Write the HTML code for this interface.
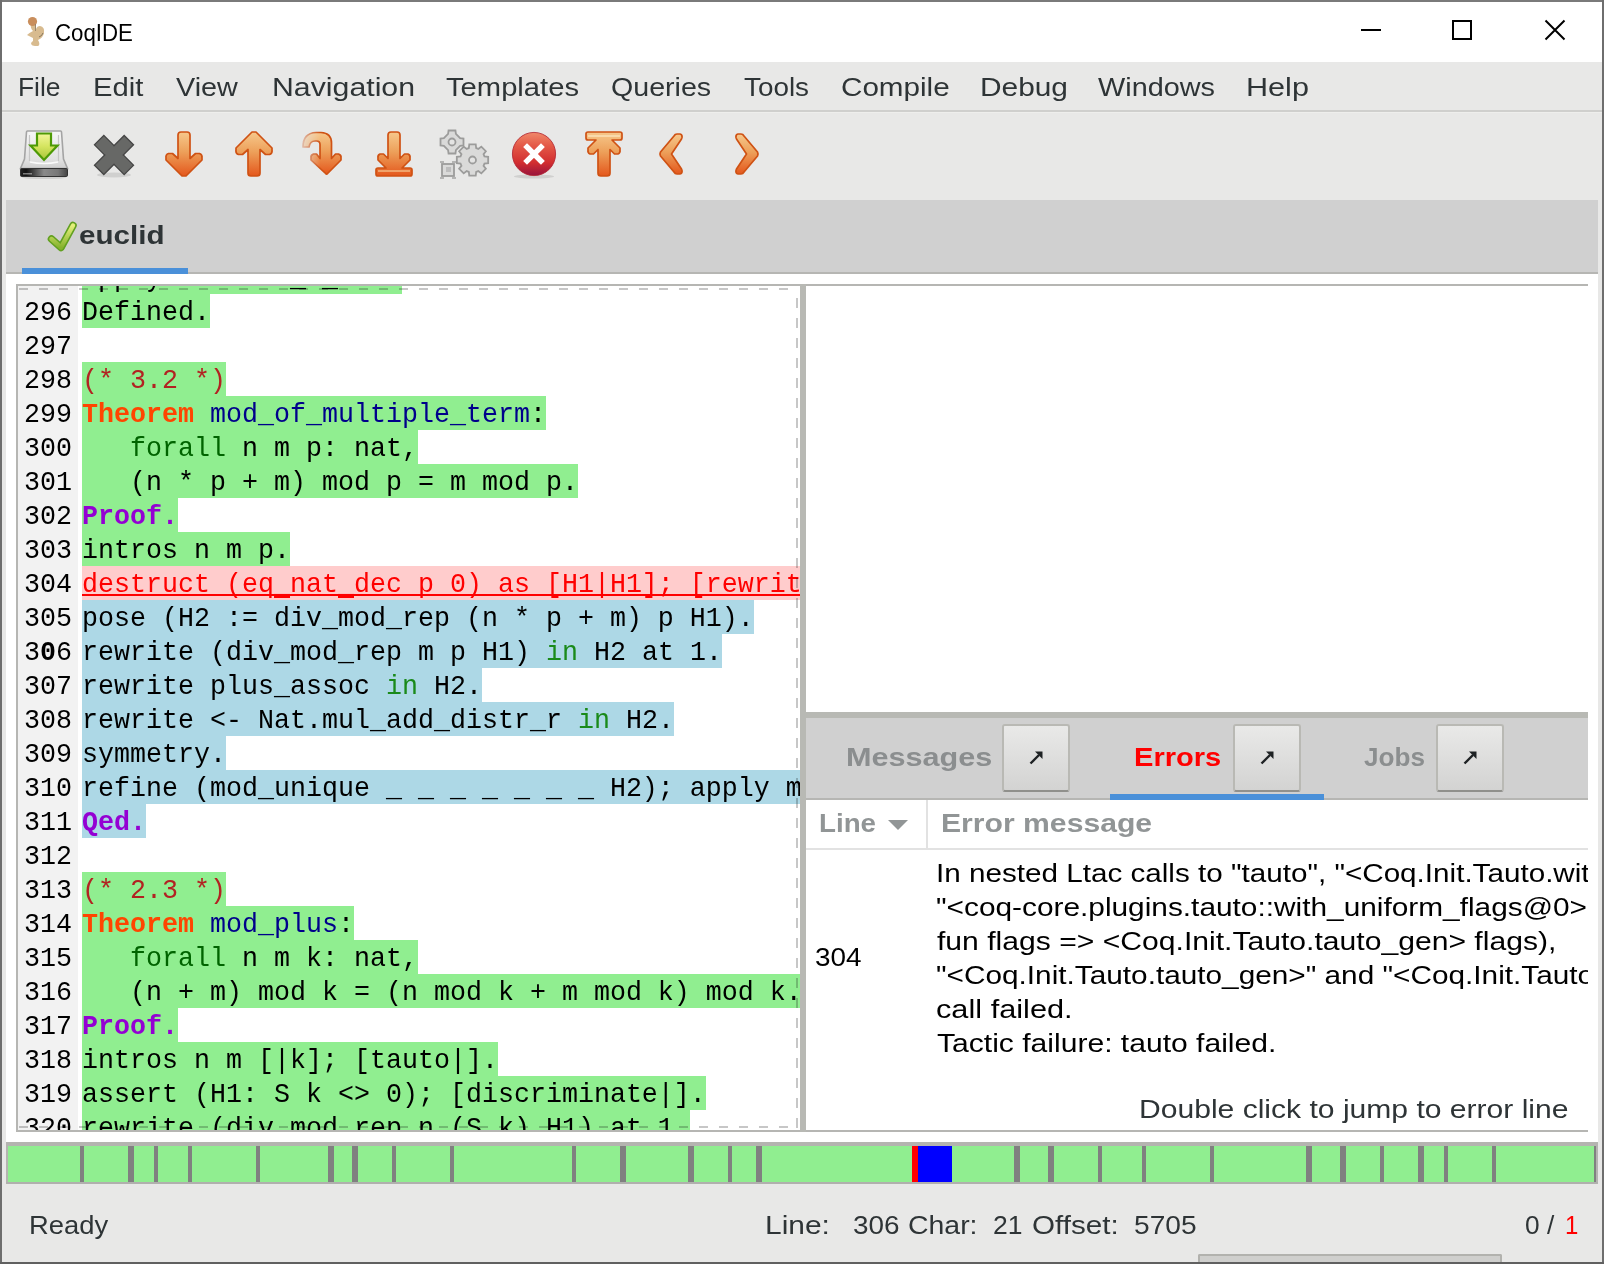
<!DOCTYPE html><html><head><meta charset="utf-8"><title>CoqIDE</title><style>*{box-sizing:border-box}
html,body{margin:0;padding:0}
body{width:1604px;height:1264px;overflow:hidden;position:relative;background:#e8e8e7;font-family:"Liberation Sans",sans-serif}
.a{position:absolute}
.t{position:absolute;white-space:pre;transform-origin:0 0}
.c{position:absolute;white-space:pre;font-family:"Liberation Mono",monospace;font-size:26.6667px;line-height:34px;color:#000;transform:scaleY(1.06);transform-origin:0 26px}
</style></head><body>
<div class="a" style="left:0px;top:0px;width:1604px;height:2px;background:#7a7a7a"></div>
<div class="a" style="left:0px;top:0px;width:2px;height:1264px;background:#6e6e6e"></div>
<div class="a" style="left:1602px;top:0px;width:2px;height:1264px;background:#6e6e6e"></div>
<div class="a" style="left:0px;top:1262px;width:1604px;height:2px;background:#606060"></div>
<div class="a" style="left:2px;top:2px;width:1600px;height:60px;background:#fff"></div>
<div class="a" style="left:2px;top:110px;width:1600px;height:2px;background:#cfcfcd"></div>
<div class="a" style="left:2px;top:112px;width:1600px;height:1px;background:#eeeeec"></div>
<div class="a" style="left:6px;top:200px;width:1592px;height:72px;background:#d0d0d0"></div>
<div class="a" style="left:6px;top:272px;width:1592px;height:2px;background:#b6b6b3"></div>
<div class="a" style="left:22px;top:268px;width:166px;height:6px;background:#4a90d9"></div>
<div class="a" style="left:6px;top:274px;width:1592px;height:868px;background:#fff"></div>
<div class="a" style="left:16px;top:284px;width:1572px;height:2px;background:#b6b6b3"></div>
<div class="a" style="left:16px;top:284px;width:2px;height:848px;background:#b6b6b3"></div>
<div class="a" style="left:16px;top:1130px;width:1572px;height:2px;background:#b6b6b3"></div>
<div class="a" style="left:18px;top:286px;width:782px;height:844px;overflow:hidden;background:#fff">
<div class="a" style="left:0;top:0;width:60px;height:844px;background:#f2f2f2"></div>
<div class="a" style="left:64px;top:-26px;width:320px;height:34px;background:#90ee90"></div>
<div class="c" style="left:6px;top:-24px">295</div>
<div class="c" style="left:64px;top:-24px">apply Hmod1a _ _ H1.</div>
<div class="a" style="left:64px;top:8px;width:128px;height:34px;background:#90ee90"></div>
<div class="c" style="left:6px;top:10px">296</div>
<div class="c" style="left:64px;top:10px">Defined.</div>
<div class="c" style="left:6px;top:44px">297</div>
<div class="c" style="left:64px;top:44px"></div>
<div class="a" style="left:64px;top:76px;width:144px;height:34px;background:#90ee90"></div>
<div class="c" style="left:6px;top:78px">298</div>
<div class="c" style="left:64px;top:78px"><span style="color:#b22222">(* 3.2 *)</span></div>
<div class="a" style="left:64px;top:110px;width:464px;height:34px;background:#90ee90"></div>
<div class="c" style="left:6px;top:112px">299</div>
<div class="c" style="left:64px;top:112px"><span style="color:#ff4500;font-weight:700">Theorem</span> <span style="color:#00008b">mod_of_multiple_term</span>:</div>
<div class="a" style="left:64px;top:144px;width:336px;height:34px;background:#90ee90"></div>
<div class="c" style="left:6px;top:146px">300</div>
<div class="c" style="left:64px;top:146px">   <span style="color:#006400">forall</span> n m p: nat,</div>
<div class="a" style="left:64px;top:178px;width:496px;height:34px;background:#90ee90"></div>
<div class="c" style="left:6px;top:180px">301</div>
<div class="c" style="left:64px;top:180px">   (n * p + m) mod p = m mod p.</div>
<div class="a" style="left:64px;top:212px;width:96px;height:34px;background:#90ee90"></div>
<div class="c" style="left:6px;top:214px">302</div>
<div class="c" style="left:64px;top:214px"><span style="color:#9400d3;font-weight:700">Proof.</span></div>
<div class="a" style="left:64px;top:246px;width:208px;height:34px;background:#90ee90"></div>
<div class="c" style="left:6px;top:248px">303</div>
<div class="c" style="left:64px;top:248px">intros n m p.</div>
<div class="a" style="left:64px;top:280px;width:1000px;height:34px;background:#ffcccc"></div>
<div class="a" style="left:64px;top:308px;width:1000px;height:2px;background:#ff0000"></div>
<div class="a" style="left:256px;top:310px;width:16px;height:2px;background:#ff0000"></div>
<div class="a" style="left:320px;top:310px;width:16px;height:2px;background:#ff0000"></div>
<div class="c" style="left:6px;top:282px">304</div>
<div class="c" style="left:64px;top:282px"><span style="color:#ff0000">destruct (eq_nat_dec p 0) as [H1|H1]; [rewrite H1 in *; tauto|].</span></div>
<div class="a" style="left:64px;top:314px;width:672px;height:34px;background:#add8e6"></div>
<div class="c" style="left:6px;top:316px">305</div>
<div class="c" style="left:64px;top:316px">pose (H2 := div_mod_rep (n * p + m) p H1).</div>
<div class="a" style="left:64px;top:348px;width:640px;height:34px;background:#add8e6"></div>
<div class="c" style="left:6px;top:350px">3<b>0</b>6</div>
<div class="c" style="left:64px;top:350px">rewrite (div_mod_rep m p H1) <span style="color:#1a8a1a">in</span> H2 at 1.</div>
<div class="a" style="left:64px;top:382px;width:400px;height:34px;background:#add8e6"></div>
<div class="c" style="left:6px;top:384px">307</div>
<div class="c" style="left:64px;top:384px">rewrite plus_assoc <span style="color:#1a8a1a">in</span> H2.</div>
<div class="a" style="left:64px;top:416px;width:592px;height:34px;background:#add8e6"></div>
<div class="c" style="left:6px;top:418px">308</div>
<div class="c" style="left:64px;top:418px">rewrite &lt;- Nat.mul_add_distr_r <span style="color:#1a8a1a">in</span> H2.</div>
<div class="a" style="left:64px;top:450px;width:144px;height:34px;background:#add8e6"></div>
<div class="c" style="left:6px;top:452px">309</div>
<div class="c" style="left:64px;top:452px">symmetry.</div>
<div class="a" style="left:64px;top:484px;width:928px;height:34px;background:#add8e6"></div>
<div class="c" style="left:6px;top:486px">310</div>
<div class="c" style="left:64px;top:486px">refine (mod_unique _ _ _ _ _ _ _ H2); apply mod_lt; tauto.</div>
<div class="a" style="left:64px;top:518px;width:64px;height:34px;background:#add8e6"></div>
<div class="c" style="left:6px;top:520px">311</div>
<div class="c" style="left:64px;top:520px"><span style="color:#9400d3;font-weight:700">Qed.</span></div>
<div class="c" style="left:6px;top:554px">312</div>
<div class="c" style="left:64px;top:554px"></div>
<div class="a" style="left:64px;top:586px;width:144px;height:34px;background:#90ee90"></div>
<div class="c" style="left:6px;top:588px">313</div>
<div class="c" style="left:64px;top:588px"><span style="color:#b22222">(* 2.3 *)</span></div>
<div class="a" style="left:64px;top:620px;width:272px;height:34px;background:#90ee90"></div>
<div class="c" style="left:6px;top:622px">314</div>
<div class="c" style="left:64px;top:622px"><span style="color:#ff4500;font-weight:700">Theorem</span> <span style="color:#00008b">mod_plus</span>:</div>
<div class="a" style="left:64px;top:654px;width:336px;height:34px;background:#90ee90"></div>
<div class="c" style="left:6px;top:656px">315</div>
<div class="c" style="left:64px;top:656px">   <span style="color:#006400">forall</span> n m k: nat,</div>
<div class="a" style="left:64px;top:688px;width:720px;height:34px;background:#90ee90"></div>
<div class="c" style="left:6px;top:690px">316</div>
<div class="c" style="left:64px;top:690px">   (n + m) mod k = (n mod k + m mod k) mod k.</div>
<div class="a" style="left:64px;top:722px;width:96px;height:34px;background:#90ee90"></div>
<div class="c" style="left:6px;top:724px">317</div>
<div class="c" style="left:64px;top:724px"><span style="color:#9400d3;font-weight:700">Proof.</span></div>
<div class="a" style="left:64px;top:756px;width:416px;height:34px;background:#90ee90"></div>
<div class="c" style="left:6px;top:758px">318</div>
<div class="c" style="left:64px;top:758px">intros n m [|k]; [tauto|].</div>
<div class="a" style="left:64px;top:790px;width:624px;height:34px;background:#90ee90"></div>
<div class="c" style="left:6px;top:792px">319</div>
<div class="c" style="left:64px;top:792px">assert (H1: S k &lt;&gt; 0); [discriminate|].</div>
<div class="a" style="left:64px;top:824px;width:608px;height:34px;background:#90ee90"></div>
<div class="c" style="left:6px;top:826px">320</div>
<div class="c" style="left:64px;top:826px">rewrite (div_mod_rep n (S k) H1) at 1.</div>
<div class="a" style="left:0;top:2px;width:778px;height:2px;background:repeating-linear-gradient(90deg,transparent 0 1px,rgba(0,0,0,.22) 1px 10px,transparent 10px 20px)"></div>
<div class="a" style="left:0;top:840px;width:778px;height:2px;background:repeating-linear-gradient(90deg,transparent 0 1px,rgba(0,0,0,.22) 1px 10px,transparent 10px 20px)"></div>
<div class="a" style="left:778px;top:12px;width:2px;height:832px;background:repeating-linear-gradient(180deg,rgba(0,0,0,.22) 0 10px,transparent 10px 20px)"></div>
</div>
<div class="a" style="left:800px;top:284px;width:6px;height:848px;background:#b8b9b4"></div>
<div class="a" style="left:806px;top:712px;width:782px;height:6px;background:#b8b9b4"></div>
<div class="a" style="left:806px;top:718px;width:782px;height:80px;background:#d0d0d0"></div>
<div class="a" style="left:806px;top:798px;width:782px;height:2px;background:#b6b6b3"></div>
<div class="a" style="left:1110px;top:794px;width:214px;height:6px;background:#4a90d9"></div>
<div class="a" style="left:1002px;top:724px;width:68px;height:68px;border:2px solid #b9b9b4;border-bottom-color:#90908c;border-radius:3px;background:linear-gradient(#e9e9e8,#d3d3d2)"></div>
<svg class="a" style="left:1023px;top:744px" width="24" height="24" viewBox="0 0 24 24"><path d="M7.5,19.5 L16,11" stroke="#1e2224" stroke-width="2.4"/><path d="M12,7.5 L19.5,7.5 L19.5,15 Z" fill="#1e2224"/></svg>
<div class="a" style="left:1233px;top:724px;width:68px;height:68px;border:2px solid #b9b9b4;border-bottom-color:#90908c;border-radius:3px;background:linear-gradient(#e9e9e8,#d3d3d2)"></div>
<svg class="a" style="left:1254px;top:744px" width="24" height="24" viewBox="0 0 24 24"><path d="M7.5,19.5 L16,11" stroke="#1e2224" stroke-width="2.4"/><path d="M12,7.5 L19.5,7.5 L19.5,15 Z" fill="#1e2224"/></svg>
<div class="a" style="left:1436px;top:724px;width:68px;height:68px;border:2px solid #b9b9b4;border-bottom-color:#90908c;border-radius:3px;background:linear-gradient(#e9e9e8,#d3d3d2)"></div>
<svg class="a" style="left:1457px;top:744px" width="24" height="24" viewBox="0 0 24 24"><path d="M7.5,19.5 L16,11" stroke="#1e2224" stroke-width="2.4"/><path d="M12,7.5 L19.5,7.5 L19.5,15 Z" fill="#1e2224"/></svg>
<div class="a" style="left:926px;top:800px;width:2px;height:48px;background:#e2e2e2"></div>
<div class="a" style="left:806px;top:848px;width:782px;height:2px;background:#e2e2e2"></div>
<svg class="a" style="left:887px;top:819px" width="22" height="12" viewBox="0 0 22 12"><path d="M1 1 L21 1 L11 11 Z" fill="#919596"/></svg>
<div class="a" style="left:6px;top:1142px;width:1592px;height:4px;background:#b4b4b0"></div>
<div class="a" style="left:6px;top:1182px;width:1592px;height:2px;background:#b0b0ad"></div>
<div class="a" style="left:6px;top:1146px;width:2px;height:36px;background:#b4b4b0"></div>
<div class="a" style="left:1596px;top:1146px;width:2px;height:36px;background:#b4b4b0"></div>
<div class="a" style="left:8px;top:1146px;width:1588px;height:36px;background:#90ee90"></div>
<div class="a" style="left:80px;top:1146px;width:4px;height:36px;background:#808080"></div>
<div class="a" style="left:128px;top:1146px;width:6px;height:36px;background:#808080"></div>
<div class="a" style="left:154px;top:1146px;width:4px;height:36px;background:#808080"></div>
<div class="a" style="left:188px;top:1146px;width:4px;height:36px;background:#808080"></div>
<div class="a" style="left:256px;top:1146px;width:4px;height:36px;background:#808080"></div>
<div class="a" style="left:328px;top:1146px;width:6px;height:36px;background:#808080"></div>
<div class="a" style="left:352px;top:1146px;width:6px;height:36px;background:#808080"></div>
<div class="a" style="left:392px;top:1146px;width:4px;height:36px;background:#808080"></div>
<div class="a" style="left:450px;top:1146px;width:4px;height:36px;background:#808080"></div>
<div class="a" style="left:572px;top:1146px;width:4px;height:36px;background:#808080"></div>
<div class="a" style="left:620px;top:1146px;width:6px;height:36px;background:#808080"></div>
<div class="a" style="left:688px;top:1146px;width:6px;height:36px;background:#808080"></div>
<div class="a" style="left:728px;top:1146px;width:4px;height:36px;background:#808080"></div>
<div class="a" style="left:756px;top:1146px;width:6px;height:36px;background:#808080"></div>
<div class="a" style="left:1014px;top:1146px;width:6px;height:36px;background:#808080"></div>
<div class="a" style="left:1048px;top:1146px;width:6px;height:36px;background:#808080"></div>
<div class="a" style="left:1098px;top:1146px;width:4px;height:36px;background:#808080"></div>
<div class="a" style="left:1142px;top:1146px;width:4px;height:36px;background:#808080"></div>
<div class="a" style="left:1210px;top:1146px;width:4px;height:36px;background:#808080"></div>
<div class="a" style="left:1306px;top:1146px;width:6px;height:36px;background:#808080"></div>
<div class="a" style="left:1340px;top:1146px;width:6px;height:36px;background:#808080"></div>
<div class="a" style="left:1380px;top:1146px;width:4px;height:36px;background:#808080"></div>
<div class="a" style="left:1418px;top:1146px;width:6px;height:36px;background:#808080"></div>
<div class="a" style="left:1444px;top:1146px;width:4px;height:36px;background:#808080"></div>
<div class="a" style="left:1492px;top:1146px;width:4px;height:36px;background:#808080"></div>
<div class="a" style="left:1594px;top:1146px;width:2px;height:36px;background:#808080"></div>
<div class="a" style="left:912px;top:1146px;width:6px;height:36px;background:#ff0000"></div>
<div class="a" style="left:918px;top:1146px;width:34px;height:36px;background:#0000ff"></div>
<div class="a" style="left:1198px;top:1254px;width:304px;height:8px;border:2px solid #b2b2ae;border-bottom:0;border-radius:2px 2px 0 0;background:#cfcfcd"></div>
<svg width="0" height="0" style="position:absolute"><defs>
<linearGradient id="og" x1="0" y1="0" x2="0" y2="1"><stop offset="0" stop-color="#f6c88c"/><stop offset="0.45" stop-color="#eda05a"/><stop offset="1" stop-color="#e4571c"/></linearGradient>
<linearGradient id="og2" x1="0" y1="0" x2="0" y2="1"><stop offset="0" stop-color="#f7cf98"/><stop offset="0.5" stop-color="#ec9a50"/><stop offset="1" stop-color="#e25a1e"/></linearGradient>
<linearGradient id="ogh" x1="0" y1="0" x2="1" y2="0"><stop offset="0" stop-color="#f2c08a" stop-opacity="0.35"/><stop offset="0.45" stop-color="#eeaa66" stop-opacity="1"/><stop offset="1" stop-color="#eaa05a"/></linearGradient>
<linearGradient id="gg" x1="0" y1="0" x2="0" y2="1"><stop offset="0" stop-color="#f2f79a"/><stop offset="0.5" stop-color="#d4e45e"/><stop offset="1" stop-color="#a6c43a"/></linearGradient>
<linearGradient id="dg" x1="0" y1="0" x2="0" y2="1"><stop offset="0" stop-color="#f6f6f6"/><stop offset="0.75" stop-color="#e2e2e2"/><stop offset="1" stop-color="#cfcfcf"/></linearGradient>
<linearGradient id="db" x1="0" y1="0" x2="1" y2="0"><stop offset="0" stop-color="#222"/><stop offset="0.12" stop-color="#111"/><stop offset="0.5" stop-color="#8a8a8a"/><stop offset="0.8" stop-color="#777"/><stop offset="1" stop-color="#444"/></linearGradient>
<linearGradient id="rg" x1="0" y1="0" x2="0" y2="1"><stop offset="0" stop-color="#f0886a"/><stop offset="0.3" stop-color="#e45a48"/><stop offset="0.7" stop-color="#d22e30"/><stop offset="1" stop-color="#98143e"/></linearGradient>
<linearGradient id="cg" x1="0" y1="0" x2="0" y2="1"><stop offset="0" stop-color="#e4f07a"/><stop offset="1" stop-color="#86b22e"/></linearGradient>
</defs></svg>
<svg class="a" style="left:1355px;top:14px" width="250" height="34" viewBox="0 0 250 34"><path d="M6,16 H26" stroke="#000" stroke-width="2"/><rect x="98" y="7" width="18" height="18" fill="none" stroke="#000" stroke-width="2"/><path d="M190.5,6.5 L209.5,25.5 M209.5,6.5 L190.5,25.5" stroke="#000" stroke-width="2"/></svg>
<svg class="a" style="left:24px;top:14px" width="24" height="34" viewBox="0 0 24 34"><path d="M7,10 Q6,14 9,17 Q5,19 3,21 Q7,23 9,24 L9,27 Q7,28 7,30 Q8,32 11,32 L14,32 Q16,31 15,28 L14,26 Q19,24 20,19 Q21,13 16,12 Q13,12 12,15 L12,10 Z" fill="#d8bb8f"/><circle cx="8.5" cy="7.5" r="4.6" fill="#c98e5c"/><path d="M11.5,10 V17" stroke="#8a7a66" stroke-width="0.8"/><path d="M15,23 Q18,22 19,19" stroke="#6f6250" stroke-width="0.8" fill="none"/></svg>
<svg class="a" style="left:18px;top:129px" width="52" height="52" viewBox="0 0 52 52"><ellipse cx="26" cy="48.5" rx="22" ry="1.6" fill="rgba(0,0,0,0.10)"/><path d="M8.5,3 Q8.5,2 9.5,2 L42.5,2 Q43.5,2 43.5,3 L45.5,30 L49.5,39.5 L2.5,39.5 L6.5,30 Z" fill="url(#dg)" stroke="#a4a4a4" stroke-width="1.6"/><path d="M11.5,6 L11.5,32 M40.5,6 L40.5,32" stroke="#c6c6c6" stroke-width="1.2"/><path d="M12,33 Q26,36 40,33" stroke="#fafafa" stroke-width="1.6" fill="none"/><rect x="2.5" y="39.5" width="47" height="8" rx="1.2" fill="url(#db)" stroke="#333" stroke-width="1"/><rect x="5" y="44" width="9" height="1.5" fill="#d0d0d0" opacity=".55"/><path d="M19,4.5 L33,4.5 L33,16.5 L39.5,16.5 L26,31 L12.5,16.5 L19,16.5 Z" fill="url(#gg)" stroke="#4e9a06" stroke-width="2.2" stroke-linejoin="miter"/></svg>
<svg class="a" style="left:90px;top:128px" width="48" height="52" viewBox="0 0 48 52"><ellipse cx="24" cy="47" rx="17" ry="2.4" fill="rgba(0,0,0,0.10)"/><g transform="translate(24,27) rotate(45)"><rect x="-21" y="-6.6" width="42" height="13.2" fill="#676866" stroke="#464646" stroke-width="1.3"/></g><g transform="translate(24,27) rotate(-45)"><rect x="-21" y="-6.6" width="42" height="13.2" fill="#676866" stroke="#464646" stroke-width="1.3"/></g><g transform="translate(24,27) rotate(45)"><rect x="-20.3" y="-5.9" width="40.6" height="11.8" fill="#676866"/></g></svg>
<svg class="a" style="left:160px;top:130px" width="48" height="48" viewBox="0 0 48 48"><path d="M18,5 Q18,2 21,2 L27,2 Q30,2 30,5 L30,28.5 L35.5,23.5 L39.5,23.5 Q42.5,24.5 42,28 L42,30 L26,46 L22,46 L6,30 L6,28 Q5.5,24.5 8.5,23.5 L12.5,23.5 L18,28.5 Z" fill="url(#og)" stroke="#cf5214" stroke-width="1.7" stroke-linejoin="round"/></svg>
<svg class="a" style="left:230px;top:130px" width="48" height="48" viewBox="0 0 48 48"><path d="M18,43 Q18,46,21,46 L27,46 Q30,46,30,43 L30,19.5 L35.5,24.5 L39.5,24.5 Q42.5,23.5,42,20 L42,18 L26,2 L22,2 L6,18 L6,20 Q5.5,23.5,8.5,24.5 L12.5,24.5 L18,19.5 Z" fill="url(#og)" stroke="#cf5214" stroke-width="1.7" stroke-linejoin="round"/></svg>
<svg class="a" style="left:300px;top:130px" width="48" height="48" viewBox="0 0 48 48"><defs><linearGradient id="fadeg" x1="0" y1="0" x2="48" y2="0" gradientUnits="userSpaceOnUse"><stop offset="0" stop-color="#333"/><stop offset="0.42" stop-color="#fff"/></linearGradient><mask id="fadem"><rect x="0" y="0" width="48" height="48" fill="url(#fadeg)"/></mask></defs><path mask="url(#fadem)" d="M3,17 Q3,3 16,2.5 L21,2.5 Q31.5,3 31.5,13 L31.5,28.5 L35.5,24 L38.5,24 Q41.5,25 41,28 L41,30 L27.6,43.5 Q26.6,44.8 25.6,43.5 L11,30 L11,28 Q10.5,25 13.5,24 L16.5,24 L20,28.5 L20,14.5 Q20,11 16.5,11 L15,11 Q10,11 9,17 Z" fill="url(#og)" stroke="#cf5214" stroke-width="1.7" stroke-linejoin="round"/></svg>
<svg class="a" style="left:370px;top:130px" width="48" height="48" viewBox="0 0 48 48"><path d="M18,5 Q18,2 21,2 L27,2 Q30,2 30,5 L30,28.5 L34.5,24 L38,24 Q40.5,25 40,28 L40,30 L32,38 L40,38 Q42,38 42,40 L42,44 Q42,46 40,46 L8,46 Q6,46 6,44 L6,40 Q6,38 8,38 L16,38 L8,30 L8,28 Q7.5,25 10,24 L13.5,24 L18,28.5 Z" fill="url(#og)" stroke="#cf5214" stroke-width="1.7" stroke-linejoin="round"/><rect x="8" y="40" width="32" height="2" fill="#f2b27a" opacity=".8"/></svg>
<svg class="a" style="left:436px;top:126px" width="56" height="56" viewBox="0 0 56 56"><path d="M12.11,7.89 L12.55,4.51 L19.45,4.51 L19.89,7.89 L24.11,12.11 L27.49,12.55 L27.49,19.45 L24.11,19.89 L19.89,24.11 L19.45,27.49 L12.55,27.49 L12.11,24.11 L7.89,19.89 L4.51,19.45 L4.51,12.55 L7.89,12.11 Z" fill="#dadad9" stroke="#9c9c9b" stroke-width="1.8" stroke-linejoin="miter"/><circle cx="16" cy="16" r="3.5" fill="#e4e4e3" stroke="#9c9c9b" stroke-width="1.8"/><path d="M32.82,22.05 L33.27,18.33 L39.73,18.33 L40.18,22.05 L42.34,22.95 L45.30,20.64 L49.86,25.20 L47.55,28.16 L48.45,30.32 L52.17,30.77 L52.17,37.23 L48.45,37.68 L47.55,39.84 L49.86,42.80 L45.30,47.36 L42.34,45.05 L40.18,45.95 L39.73,49.67 L33.27,49.67 L32.82,45.95 L30.66,45.05 L27.70,47.36 L23.14,42.80 L25.45,39.84 L24.55,37.68 L20.83,37.23 L20.83,30.77 L24.55,30.32 L25.45,28.16 L23.14,25.20 L27.70,20.64 L30.66,22.95 Z" fill="#dadad9" stroke="#9c9c9b" stroke-width="1.8" stroke-linejoin="miter"/><circle cx="36.5" cy="34" r="3.5" fill="#e4e4e3" stroke="#9c9c9b" stroke-width="1.8"/><rect x="6" y="38" width="12" height="12" fill="#dadad9" stroke="#9c9c9b" stroke-width="1.8"/><path d="M4,36 h4 M16,36 h4 M4,52 h4 M16,52 h4" stroke="#b4b4b3" stroke-width="2"/><rect x="10" y="41" width="5" height="5" fill="#bdbdbd"/></svg>
<svg class="a" style="left:508px;top:128px" width="52" height="52" viewBox="0 0 52 52"><ellipse cx="26" cy="48.5" rx="20" ry="2" fill="rgba(0,0,0,0.10)"/><circle cx="26" cy="26" r="21.6" fill="url(#rg)" stroke="#b0202c" stroke-width="0.8"/><path d="M19,19 L33,33 M33,19 L19,33" stroke="#fff" stroke-width="5.4" stroke-linecap="square"/></svg>
<svg class="a" style="left:580px;top:130px" width="48" height="48" viewBox="0 0 48 48"><path d="M18,43 Q18,46,21,46 L27,46 Q30,46,30,43 L30,19.5 L34.5,24 L38,24 Q40.5,23,40,20 L40,18 L32,10 L40,10 Q42,10,42,8 L42,4 Q42,2,40,2 L8,2 Q6,2,6,4 L6,8 Q6,10,8,10 L16,10 L8,18 L8,20 Q7.5,23,10,24 L13.5,24 L18,19.5 Z" fill="url(#og)" stroke="#cf5214" stroke-width="1.7" stroke-linejoin="round"/><rect x="8" y="5" width="32" height="2" fill="#fbe0b4" opacity=".8"/></svg>
<svg class="a" style="left:656px;top:130px" width="32" height="48" viewBox="0 0 32 48"><path d="M18,6 Q19,4 21,4 L24,4 Q26.5,4.5 26,7.5 L25.5,9 L15.5,24 L25.5,39 L26,40.5 Q26.5,43.5 24,44 L21,44 Q19,44 18,42 L4.5,26 Q3.5,24 4.5,22 Z" fill="url(#og)" stroke="#cf5214" stroke-width="1.7" stroke-linejoin="round"/></svg>
<svg class="a" style="left:732px;top:130px" width="32" height="48" viewBox="0 0 32 48"><path d="M18,6 Q19,4 21,4 L24,4 Q26.5,4.5 26,7.5 L25.5,9 L15.5,24 L25.5,39 L26,40.5 Q26.5,43.5 24,44 L21,44 Q19,44 18,42 L4.5,26 Q3.5,24 4.5,22 Z" fill="url(#og)" stroke="#cf5214" stroke-width="1.7" stroke-linejoin="round" transform="matrix(-1 0 0 1 30 0)"/></svg>
<svg class="a" style="left:44px;top:217px" width="36" height="38" viewBox="0 0 36 38"><path d="M7.5,22 L17,30.5 L29,8.5" fill="none" stroke="#62a020" stroke-width="7.6" stroke-linecap="round" stroke-linejoin="round"/><path d="M7.5,22 L17,30.5 L29,8.5" fill="none" stroke="url(#cg)" stroke-width="4.4" stroke-linecap="round" stroke-linejoin="round"/></svg>
<div class="t" style="left:55.07px;top:21.00px;font-family:'Liberation Sans', sans-serif;font-weight:400;font-size:24px;line-height:24px;color:#000;transform:scaleX(0.9265);">CoqIDE</div>
<div class="t" style="left:17.97px;top:74.00px;font-family:'Liberation Sans', sans-serif;font-weight:400;font-size:26px;line-height:26px;color:#2e3436;transform:scaleX(1.0143);">File</div>
<div class="t" style="left:92.75px;top:74.00px;font-family:'Liberation Sans', sans-serif;font-weight:400;font-size:26px;line-height:26px;color:#2e3436;transform:scaleX(1.1244);">Edit</div>
<div class="t" style="left:176.00px;top:74.00px;font-family:'Liberation Sans', sans-serif;font-weight:400;font-size:26px;line-height:26px;color:#2e3436;transform:scaleX(1.1050);">View</div>
<div class="t" style="left:271.67px;top:74.00px;font-family:'Liberation Sans', sans-serif;font-weight:400;font-size:26px;line-height:26px;color:#2e3436;transform:scaleX(1.1642);">Navigation</div>
<div class="t" style="left:446.00px;top:74.00px;font-family:'Liberation Sans', sans-serif;font-weight:400;font-size:26px;line-height:26px;color:#2e3436;transform:scaleX(1.1224);">Templates</div>
<div class="t" style="left:610.90px;top:74.00px;font-family:'Liberation Sans', sans-serif;font-weight:400;font-size:26px;line-height:26px;color:#2e3436;transform:scaleX(1.0995);">Queries</div>
<div class="t" style="left:744.00px;top:74.00px;font-family:'Liberation Sans', sans-serif;font-weight:400;font-size:26px;line-height:26px;color:#2e3436;transform:scaleX(1.0709);">Tools</div>
<div class="t" style="left:840.86px;top:74.00px;font-family:'Liberation Sans', sans-serif;font-weight:400;font-size:26px;line-height:26px;color:#2e3436;transform:scaleX(1.1394);">Compile</div>
<div class="t" style="left:979.70px;top:74.00px;font-family:'Liberation Sans', sans-serif;font-weight:400;font-size:26px;line-height:26px;color:#2e3436;transform:scaleX(1.1482);">Debug</div>
<div class="t" style="left:1098.00px;top:74.00px;font-family:'Liberation Sans', sans-serif;font-weight:400;font-size:26px;line-height:26px;color:#2e3436;transform:scaleX(1.1093);">Windows</div>
<div class="t" style="left:1245.65px;top:74.00px;font-family:'Liberation Sans', sans-serif;font-weight:400;font-size:26px;line-height:26px;color:#2e3436;transform:scaleX(1.1762);">Help</div>
<div class="t" style="left:79.00px;top:223.00px;font-family:'Liberation Sans', sans-serif;font-weight:700;font-size:25px;line-height:25px;color:#2e3436;transform:scaleX(1.1836);">euclid</div>
<div class="t" style="left:845.78px;top:745.00px;font-family:'Liberation Sans', sans-serif;font-weight:700;font-size:25px;line-height:25px;color:#8b8e8f;transform:scaleX(1.2243);">Messages</div>
<div class="t" style="left:1133.84px;top:745.00px;font-family:'Liberation Sans', sans-serif;font-weight:700;font-size:25px;line-height:25px;color:#ff0000;transform:scaleX(1.1623);">Errors</div>
<div class="t" style="left:1364.00px;top:745.00px;font-family:'Liberation Sans', sans-serif;font-weight:700;font-size:25px;line-height:25px;color:#8b8e8f;transform:scaleX(1.0445);">Jobs</div>
<div class="t" style="left:818.89px;top:811.00px;font-family:'Liberation Sans', sans-serif;font-weight:700;font-size:25px;line-height:25px;color:#919596;transform:scaleX(1.1092);">Line</div>
<div class="t" style="left:940.79px;top:811.00px;font-family:'Liberation Sans', sans-serif;font-weight:700;font-size:25px;line-height:25px;color:#919596;transform:scaleX(1.2056);">Error message</div>
<div class="t" style="left:815.00px;top:944.00px;font-family:'Liberation Sans', sans-serif;font-weight:400;font-size:26px;line-height:26px;color:#000;transform:scaleX(1.0718);">304</div>
<div class="t" style="left:1138.59px;top:1097.00px;font-family:'Liberation Sans', sans-serif;font-weight:400;font-size:25px;line-height:25px;color:#2e3436;transform:scaleX(1.2027);">Double click to jump to error line</div>
<div class="t" style="left:28.89px;top:1212.00px;font-family:'Liberation Sans', sans-serif;font-weight:400;font-size:26px;line-height:26px;color:#2e3436;transform:scaleX(1.0525);">Ready</div>
<div class="t" style="left:764.70px;top:1212.00px;font-family:'Liberation Sans', sans-serif;font-weight:400;font-size:26px;line-height:26px;color:#2e3436;transform:scaleX(1.1504);">Line:</div>
<div class="t" style="left:853.00px;top:1212.00px;font-family:'Liberation Sans', sans-serif;font-weight:400;font-size:26px;line-height:26px;color:#2e3436;transform:scaleX(1.0718);">306</div>
<div class="t" style="left:907.91px;top:1212.00px;font-family:'Liberation Sans', sans-serif;font-weight:400;font-size:26px;line-height:26px;color:#2e3436;transform:scaleX(1.0935);">Char:</div>
<div class="t" style="left:992.98px;top:1212.00px;font-family:'Liberation Sans', sans-serif;font-weight:400;font-size:26px;line-height:26px;color:#2e3436;transform:scaleX(1.0197);">21</div>
<div class="t" style="left:1031.86px;top:1212.00px;font-family:'Liberation Sans', sans-serif;font-weight:400;font-size:26px;line-height:26px;color:#2e3436;transform:scaleX(1.1388);">Offset:</div>
<div class="t" style="left:1133.92px;top:1212.00px;font-family:'Liberation Sans', sans-serif;font-weight:400;font-size:26px;line-height:26px;color:#2e3436;transform:scaleX(1.0819);">5705</div>
<div class="t" style="left:1524.99px;top:1212.00px;font-family:'Liberation Sans', sans-serif;font-weight:400;font-size:26px;line-height:26px;color:#2e3436;transform:scaleX(1.0110);">0 /</div>
<div class="t" style="left:1565.08px;top:1212.00px;font-family:'Liberation Sans', sans-serif;font-weight:400;font-size:26px;line-height:26px;color:#ff0000;transform:scaleX(0.9231);">1</div>
<div class="a" style="left:806px;top:850px;width:782px;height:280px;overflow:hidden"><div class="t" style="left:129.63px;top:11.00px;font-family:'Liberation Sans', sans-serif;font-weight:400;font-size:25px;line-height:25px;color:#000;transform:scaleX(1.1857);">In nested Ltac calls to "tauto", "&lt;Coq.Init.Tauto.with_uniform_flags&gt;"</div><div class="t" style="left:129.81px;top:45.00px;font-family:'Liberation Sans', sans-serif;font-weight:400;font-size:25px;line-height:25px;color:#000;transform:scaleX(1.1929);">"&lt;coq-core.plugins.tauto::with_uniform_flags@0&gt;"</div><div class="t" style="left:131.00px;top:79.00px;font-family:'Liberation Sans', sans-serif;font-weight:400;font-size:25px;line-height:25px;color:#000;transform:scaleX(1.2044);">fun flags =&gt; &lt;Coq.Init.Tauto.tauto_gen&gt; flags),</div><div class="t" style="left:129.81px;top:113.00px;font-family:'Liberation Sans', sans-serif;font-weight:400;font-size:25px;line-height:25px;color:#000;transform:scaleX(1.1907);">"&lt;Coq.Init.Tauto.tauto_gen&gt;" and "&lt;Coq.Init.Tauto.tauto_intuitionistic&gt;", last</div><div class="t" style="left:129.77px;top:147.00px;font-family:'Liberation Sans', sans-serif;font-weight:400;font-size:25px;line-height:25px;color:#000;transform:scaleX(1.2289);">call failed.</div><div class="t" style="left:131.00px;top:181.00px;font-family:'Liberation Sans', sans-serif;font-weight:400;font-size:25px;line-height:25px;color:#000;transform:scaleX(1.2029);">Tactic failure: tauto failed.</div></div>
</body></html>
